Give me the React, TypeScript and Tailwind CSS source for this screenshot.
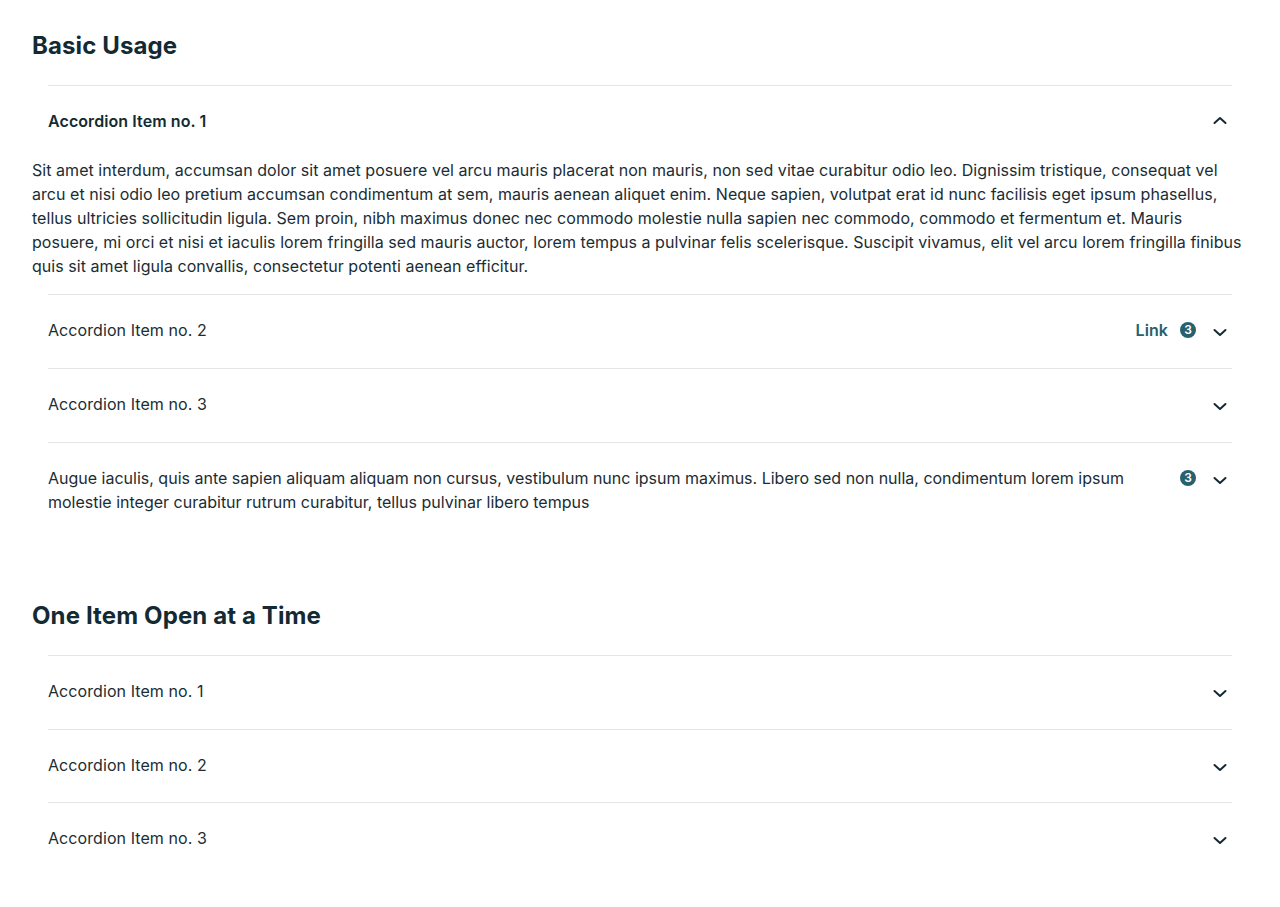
import React from "react";

const Chevron = ({ up = false }: { up?: boolean }) => (
  <svg width="16" height="16" viewBox="0 0 16 16" fill="none" className="shrink-0">
    {up ? (
      <path d="M2.5 10L8 5L13.5 10" stroke="#132a33" strokeWidth="2" strokeLinecap="round" strokeLinejoin="round" />
    ) : (
      <path d="M2.5 8L8 13L13.5 8" stroke="#132a33" strokeWidth="2" strokeLinecap="round" strokeLinejoin="round" />
    )}
  </svg>
);

const Badge = () => (
  <span className="flex h-4 w-4 shrink-0 items-center justify-center rounded-full bg-[#28606e] text-[12px] font-semibold leading-none text-white">
    3
  </span>
);

const Section = ({ title, children }: { title: string; children: React.ReactNode }) => (
  <section>
    <h2 className="mb-[23px] text-2xl font-bold leading-8 tracking-[0.12px] text-[#132a33]">{title}</h2>
    <div className="mx-4">{children}</div>
  </section>
);

export default function App() {
  return (
    <div className="min-h-[907px] bg-white px-8 pt-[30px]" style={{ fontFamily: "Inter, 'Noto Sans', sans-serif" }}>
      <Section title="Basic Usage">
        <div className="-mx-4">
          <div className="mx-4 border-t border-[#e3e6e8]">
            <div className="flex items-start gap-4 pt-[23px] pb-[25px]">
              <div className="flex-1 text-base font-semibold leading-6 tracking-[0.08px] text-[#132a33]">Accordion Item no. 1</div>
              <div className="flex h-6 items-center pr-1">
                <Chevron up />
              </div>
            </div>
          </div>
          <div className="pb-4 text-base leading-6 tracking-[0.045px] text-[#1a2d34]">
            Sit amet interdum, accumsan dolor sit amet posuere vel arcu mauris placerat non mauris, non sed vitae curabitur odio leo. Dignissim tristique, consequat vel arcu et nisi odio leo pretium accumsan condimentum at sem, mauris aenean aliquet enim. Neque sapien, volutpat erat id nunc facilisis eget ipsum phasellus, tellus ultricies sollicitudin ligula. Sem proin, nibh maximus donec nec commodo molestie nulla sapien nec commodo, commodo et fermentum et. Mauris posuere, mi orci et nisi et iaculis lorem fringilla sed mauris auctor, lorem tempus a pulvinar felis scelerisque. Suscipit vivamus, elit vel arcu lorem fringilla finibus quis sit amet ligula convallis, consectetur potenti aenean efficitur.
          </div>
        </div>
        <div className="border-t border-[#e3e6e8]">
          <div className="flex items-start gap-4 pt-[23px] pb-[26px]">
            <div className="flex-1 text-base leading-6 tracking-[0.08px] text-[#1a2d34]">Accordion Item no. 2</div>
            <div className="flex h-6 items-center gap-3 pr-1">
              <span className="text-base font-semibold tracking-[0.08px] text-[#24606e]">Link</span>
              <Badge />
              <span className="ml-1 flex"><Chevron /></span>
            </div>
          </div>
        </div>
        <div className="border-t border-[#e3e6e8]">
          <div className="flex items-start gap-4 pt-[23px] pb-[26px]">
            <div className="flex-1 text-base leading-6 tracking-[0.08px] text-[#1a2d34]">Accordion Item no. 3</div>
            <div className="flex h-6 items-center pr-1">
              <Chevron />
            </div>
          </div>
        </div>
        <div className="border-t border-[#e3e6e8]">
          <div className="flex items-start gap-4 pt-[23px] pb-6">
            <div className="flex-1 pr-5 text-base leading-6 text-[#1a2d34]">
              Augue iaculis, quis ante sapien aliquam aliquam non cursus, vestibulum nunc ipsum maximus. Libero sed non nulla, condimentum lorem ipsum molestie integer curabitur rutrum curabitur, tellus pulvinar libero tempus
            </div>
            <div className="flex h-6 items-center gap-4 pr-1">
              <Badge />
              <Chevron />
            </div>
          </div>
        </div>
      </Section>
      <div className="h-[62px]" />
      <Section title="One Item Open at a Time">
        {["Accordion Item no. 1", "Accordion Item no. 2", "Accordion Item no. 3"].map((t) => (
          <div key={t} className="border-t border-[#e3e6e8]">
            <div className="flex items-start gap-4 pt-[23px] pb-[25.5px]">
              <div className="flex-1 text-base leading-6 tracking-[0.08px] text-[#1a2d34]">{t}</div>
              <div className="flex h-6 items-center pr-1">
                <Chevron />
              </div>
            </div>
          </div>
        ))}
      </Section>
    </div>
  );
}
